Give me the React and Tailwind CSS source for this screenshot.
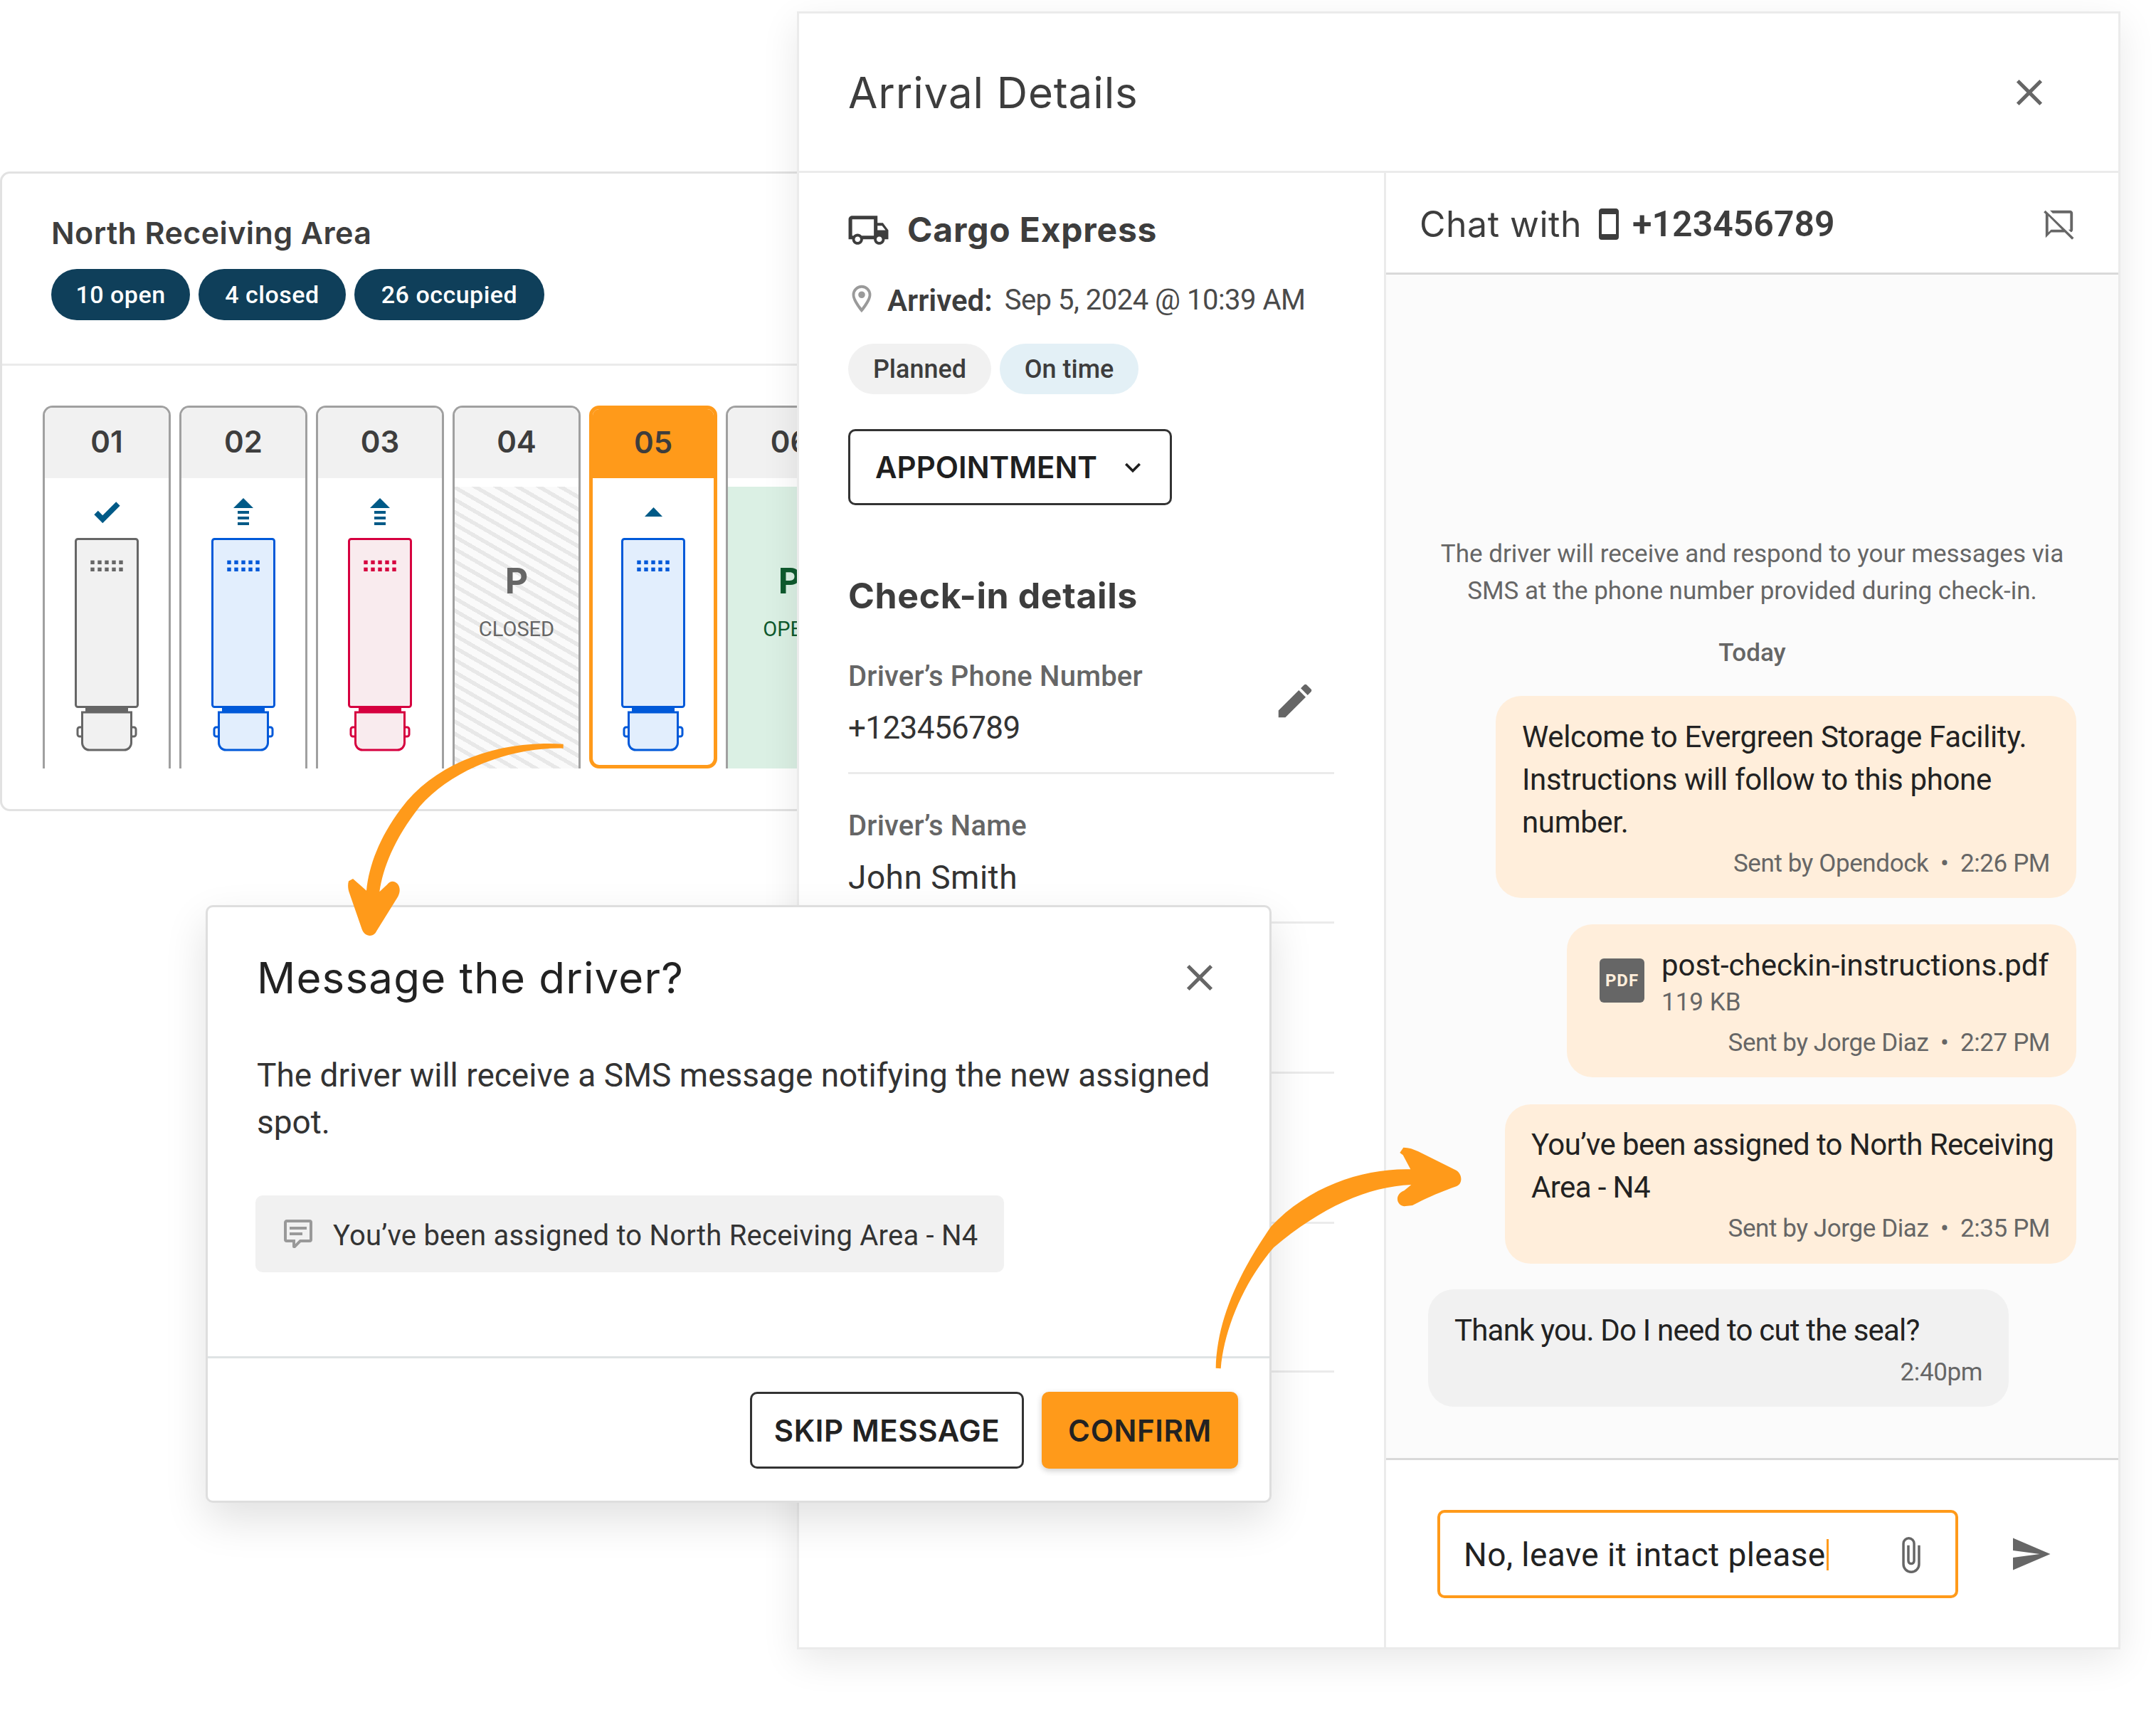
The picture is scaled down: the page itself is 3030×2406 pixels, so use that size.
const HEAD = '[font-family:Inter,sans-serif]';

function Mdi({ d, size, className = '', viewBox = '0 0 24 24' }) {
  return (
    <svg width={size} height={size} viewBox={viewBox} className={`shrink-0 ${className}`} fill="currentColor">
      <path d={d} />
    </svg>
  );
}

const ICONS = {
  close: 'M19,6.41L17.59,5L12,10.59L6.41,5L5,6.41L10.59,12L5,17.59L6.41,19L12,13.41L17.59,19L19,17.59L13.41,12L19,6.41Z',
  truck: 'M18 18.5C18.83 18.5 19.5 17.83 19.5 17C19.5 16.17 18.83 15.5 18 15.5C17.17 15.5 16.5 16.17 16.5 17C16.5 17.83 17.17 18.5 18 18.5M19.5 9.5H17V12H21.46L19.5 9.5M6 18.5C6.83 18.5 7.5 17.83 7.5 17C7.5 16.17 6.83 15.5 6 15.5C5.17 15.5 4.5 16.17 4.5 17C4.5 17.83 5.17 18.5 6 18.5M20 8L23 12V17H21C21 18.66 19.66 20 18 20C16.34 20 15 18.66 15 17H9C9 18.66 7.66 20 6 20C4.34 20 3 18.66 3 17H1V6C1 4.89 1.89 4 3 4H17V8H20M3 6V15H3.76C4.31 14.39 5.11 14 6 14C6.89 14 7.69 14.39 8.24 15H15V6H3Z',
  pin: 'M12,6.5A2.5,2.5 0 0,1 14.5,9A2.5,2.5 0 0,1 12,11.5A2.5,2.5 0 0,1 9.5,9A2.5,2.5 0 0,1 12,6.5M12,2A7,7 0 0,1 19,9C19,14.25 12,22 12,22C12,22 5,14.25 5,9A7,7 0 0,1 12,2M12,4A5,5 0 0,0 7,9C7,10 7,12 12,18.71C17,12 17,10 17,9A5,5 0 0,0 12,4Z',
  chevron: 'M7.41,8.58L12,13.17L16.59,8.58L18,10L12,16L6,10L7.41,8.58Z',
  pencil: 'M20.71,7.04C21.1,6.65 21.1,6 20.71,5.63L18.37,3.29C18,2.9 17.35,2.9 16.96,3.29L15.12,5.12L18.87,8.87M3,17.25V21H6.75L17.81,9.93L14.06,6.18L3,17.25Z',
  phone: 'M17,19H7V5H17M17,1H7C5.89,1 5,1.89 5,3V21A2,2 0 0,0 7,23H17A2,2 0 0,0 19,21V3C19,1.89 18.1,1 17,1Z',
  chatOff: 'M7.2 4L5.2 2H20C21.1 2 22 2.9 22 4V16C22 16.9 21.4 17.7 20.6 17.9L18.7 16H20V4H7.2M22.7 22.1L21.4 23.4L16 18H6L2 22V4.6L.6 3.3L1.9 2L22.7 22.1M14 16L4 6V18L6 16H14Z',
  comment: 'M9,22A1,1 0 0,1 8,21V18H4A2,2 0 0,1 2,16V4C2,2.89 2.9,2 4,2H20A2,2 0 0,1 22,4V16A2,2 0 0,1 20,18H13.9L10.2,21.71C10,21.9 9.75,22 9.5,22V22H9M10,16V19.08L13.08,16H20V4H4V16H10M6,7H18V9H6V7M6,11H15V13H6V11Z',
  check: 'M9,20.42L2.79,14.21L5.62,11.38L9,14.77L18.88,4.88L21.71,7.71L9,20.42Z',
  clip: 'M16.5,6V17.5A4,4 0 0,1 12.5,21.5A4,4 0 0,1 8.5,17.5V5A2.5,2.5 0 0,1 11,2.5A2.5,2.5 0 0,1 13.5,5V15.5A1,1 0 0,1 12.5,16.5A1,1 0 0,1 11.5,15.5V6H10V15.5A2.5,2.5 0 0,0 12.5,18A2.5,2.5 0 0,0 15,15.5V5A4,4 0 0,0 11,1A4,4 0 0,0 7,5V17.5A5.5,5.5 0 0,0 12.5,23A5.5,5.5 0 0,0 18,17.5V6H16.5Z',
  send: 'M2,21L23,12L2,3V10L17,12L2,14V21Z',
};

// trailer seen from above, same drawing in every occupied spot
function Trailer({ stroke, fill }) {
  const rows = [31.6, 41.6];
  const cols = [22.3, 32.3, 42.3, 52.3, 62.3];
  return (
    <svg width="90" height="300" viewBox="0 0 90 300" className="shrink-0">
      <rect x="1.5" y="1.5" width="87" height="236" rx="3" fill={fill} stroke={stroke} strokeWidth="3" />
      {rows.map(y => cols.map(x => <rect key={`${x}-${y}`} x={x} y={y} width="5.4" height="5.4" fill={stroke} />))}
      <rect x="15" y="238" width="60" height="7" fill={stroke} />
      <path d="M10.5 245H79.5V288a10 10 0 0 1-10 10H20.5a10 10 0 0 1-10-10Z" fill={fill} stroke={stroke} strokeWidth="3" />
      <path d="M10 266H7a3 3 0 0 0-3 3v7a3 3 0 0 0 3 3h3M80 266h3a3 3 0 0 1 3 3v7a3 3 0 0 1-3 3h-3" fill="none" stroke={stroke} strokeWidth="3" />
    </svg>
  );
}

function StateIcon({ type }) {
  if (type === 'check') return <Mdi d={ICONS.check} size={46} className="text-[#005a87]" />;
  if (type === 'up') {
    return (
      <svg width="28" height="38" viewBox="0 0 28 38" className="text-[#005a87]" fill="currentColor">
        <path d="M14 0L28 14H0Z" />
        <rect x="6" y="18" width="16" height="4" />
        <rect x="6" y="26" width="16" height="4" />
        <rect x="6" y="34" width="16" height="4" />
      </svg>
    );
  }
  return (
    <svg width="25" height="13" viewBox="0 0 25 13" className="text-[#005a87]" fill="currentColor">
      <path d="M12.5 0L25 13H0Z" />
    </svg>
  );
}

function Spot({ label, truck, icon, active, status }) {
  return (
    <div
      className={`flex h-[510px] w-[180px] shrink-0 flex-col overflow-hidden ${
        active
          ? 'rounded-[14px] border-[5px] border-[#ff9a1a]'
          : 'rounded-t-[14px] border-x-[3px] border-t-[3px] border-[#a0a0a0]'
      }`}
    >
      <div
        className={`flex shrink-0 items-center justify-center pb-[4px] ${HEAD} text-[42px] font-semibold text-[#3d3d3d] ${
          active ? 'h-[97px] bg-[#ff9a1a]' : 'h-[99px] bg-[#f1f1f1]'
        }`}
      >
        {label}
      </div>
      {truck && (
        <div className="flex flex-col items-center pt-[28px]">
          <div className="flex h-[38px] items-center justify-center">
            <StateIcon type={icon} />
          </div>
          <div className="mt-[18px]">
            <Trailer {...truck} />
          </div>
        </div>
      )}
      {status === 'closed' && (
        <div className="mt-[12px] flex flex-1 flex-col items-center bg-[repeating-linear-gradient(30deg,#fafafa_0_9.5px,#e8e8e8_9.5px_15px)] pt-[107px] text-[#666666]">
          <div className={`${HEAD} text-[50px] leading-[50px] font-bold`}>P</div>
          <div className="mt-[26px] text-[29px] leading-[34px]">CLOSED</div>
        </div>
      )}
      {status === 'open' && (
        <div className="mt-[12px] flex flex-1 flex-col items-center bg-[#dbf0e4] pt-[107px] text-[#0f5a2e]">
          <div className={`${HEAD} text-[50px] leading-[50px] font-bold`}>P</div>
          <div className="mt-[26px] text-[29px] leading-[34px]">OPEN</div>
        </div>
      )}
    </div>
  );
}

function Pill({ className, children }) {
  return (
    <span className={`flex h-[72px] items-center justify-center rounded-full bg-[#0f3f5a] text-[34px] font-medium tracking-[0.5px] text-white ${className}`}>
      {children}
    </span>
  );
}

function AreaCard() {
  const gray = { stroke: '#666666', fill: '#f1f1f1' };
  const blue = { stroke: '#0059d9', fill: '#e2eefd' };
  const red = { stroke: '#d6003f', fill: '#f9ebee' };
  return (
    <div className="absolute top-[241px] left-0 h-[899px] w-[1180px] overflow-hidden rounded-[14px] border-[3px] border-[#e2e2e2] bg-white">
      <div className="h-[270px] border-b-[3px] border-[#ebebeb] pt-[57px] pl-[69px]">
        <h2 className={`${HEAD} text-[43px] leading-[52px] font-semibold tracking-[0.4px] text-[#3d3d3d]`}>North Receiving Area</h2>
        <div className="mt-[25px] flex gap-[12px]">
          <Pill className="w-[195px]">10 open</Pill>
          <Pill className="w-[207px]">4 closed</Pill>
          <Pill className="w-[267px]">26 occupied</Pill>
        </div>
      </div>
      <div className="flex gap-[12px] pt-[56px] pl-[57px]">
        <Spot label="01" truck={gray} icon="check" />
        <Spot label="02" truck={blue} icon="up" />
        <Spot label="03" truck={red} icon="up" />
        <Spot label="04" status="closed" />
        <Spot label="05" truck={blue} icon="small" active />
        <Spot label="06" status="open" />
      </div>
    </div>
  );
}

function Field({ label, value, valueClass, edit }) {
  return (
    <div className="relative h-[210px] border-b-[3px] border-[#ebebeb] pt-[50px]">
      <div className="text-[40px] leading-[46px] font-medium tracking-[0.2px] text-[#666666]">{label}</div>
      <div className={`mt-[23px] leading-[52px] text-[#333333] ${valueClass}`}>{value}</div>
      {edit && <Mdi d={ICONS.pencil} size={62} className="absolute top-[76px] right-[24px] text-[#666666]" />}
    </div>
  );
}

function DetailsColumn() {
  return (
    <div className="w-[825px] shrink-0 border-r-[3px] border-[#ebebeb] pt-[57px] pr-[70px] pl-[69px]">
      <div className="flex h-[46px] items-center">
        <Mdi d={ICONS.truck} size={61} className="-ml-[2px] text-[#3d3d3d]" />
        <span className={`ml-[24px] ${HEAD} text-[48px] font-bold tracking-[0.8px] text-[#3d3d3d]`}>Cargo Express</span>
      </div>
      <div className="mt-[54px] flex h-[44px] items-center text-[42px] text-[#4a4a4a]">
        <Mdi d={ICONS.pin} size={46} className="-mt-[4px] ml-[-4px] text-[#9a9a9a]" />
        <span className="ml-[13px] font-semibold text-[#3d3d3d]">Arrived:</span>
        <span className="ml-[17px] text-[40px] tracking-[-0.5px]">Sep 5, 2024 @ 10:39 AM</span>
      </div>
      <div className="mt-[39px] flex gap-[12px] text-[36px] font-medium text-[#3d3d3d]">
        <span className="flex h-[71px] w-[201px] items-center justify-center rounded-full bg-[#f1f1f1]">Planned</span>
        <span className="flex h-[71px] w-[195px] items-center justify-center rounded-full bg-[#e3f0f6]">On time</span>
      </div>
      <div className={`mt-[49px] flex h-[107px] w-[455px] items-center rounded-[10px] border-[3px] border-[#333333] pl-[35px] ${HEAD} text-[42px] font-semibold text-[#1f1f1f]`}>
        APPOINTMENT
        <Mdi d={ICONS.chevron} size={44} className="ml-[28px] text-[#1f1f1f]" />
      </div>
      <h3 className={`mt-[99px] mb-[13px] ${HEAD} text-[50px] leading-[56px] font-bold tracking-[0.6px] text-[#3d3d3d]`}>Check-in details</h3>
      <Field label="Driver’s Phone Number" value="+123456789" valueClass="text-[44px] tracking-[-0.6px]" edit />
      <Field label="Driver’s Name" value="John Smith" valueClass="text-[46px] tracking-[0.5px]" />
      <div className="h-[211px] border-b-[3px] border-[#ebebeb]" />
      <div className="h-[211px] border-b-[3px] border-[#ebebeb]" />
      <div className="h-[209px] border-b-[3px] border-[#ebebeb]" />
    </div>
  );
}

function Meta({ children, className = '' }) {
  return <div className={`text-right text-[35px] leading-[40px] tracking-[-0.4px] text-[#666666] ${className}`}>{children}</div>;
}

function ChatColumn() {
  return (
    <div className="flex min-w-0 flex-1 flex-col bg-[#fbfbfb]">
      <div className="flex h-[143px] shrink-0 items-center justify-between border-b-[3px] border-[#d9d9d9] bg-white pt-[4px] pr-[60px] pl-[47px]">
        <div className="flex items-center text-[#3d3d3d]">
          <span className={`${HEAD} text-[50px] tracking-[0.5px]`}>Chat with</span>
          <Mdi d={ICONS.phone} size={48} className="ml-[14px] text-[#3d3d3d]" />
          <span className="ml-[9px] text-[50px] font-semibold">+123456789</span>
        </div>
        <Mdi d={ICONS.chatOff} size={46} className="text-[#666666]" />
      </div>

      <div className="flex flex-1 flex-col justify-end pr-[59px] pb-[72px] pl-[59px]">
        <p className="text-center text-[35px] leading-[52px] text-[#666666]">
          The driver will receive and respond to your messages via
          <br />
          SMS at the phone number provided during check-in.
        </p>
        <div className="mt-[39px] mb-[38px] text-center text-[35px] leading-[44px] font-medium text-[#666666]">Today</div>

        <div className="w-[816px] self-end rounded-[36px] bg-[#ffeedb] px-[37px] pt-[28px] pb-[28px] text-[42px] leading-[60px] tracking-[-0.35px] whitespace-nowrap text-[#222222]">
          Welcome to Evergreen Storage Facility.
          <br />
          Instructions will follow to this phone
          <br />
          number.
          <Meta className="mt-[8px]">Sent by Opendock&nbsp; •&nbsp; 2:26 PM</Meta>
        </div>

        <div className="mt-[37px] w-[716px] self-end rounded-[36px] bg-[#ffeedb] pt-[35px] pr-[37px] pb-[28px] pl-[46px]">
          <div className="flex gap-[24px]">
            <div className="mt-[13px] flex h-[62px] w-[63px] shrink-0 items-center justify-center rounded-[6px] bg-[#666666] text-[24px] font-bold tracking-[1px] text-[#ffeedb]">
              PDF
            </div>
            <div>
              <div className="text-[42px] leading-[46px] whitespace-nowrap text-[#222222]">post-checkin-instructions.pdf</div>
              <div className="mt-[9px] text-[35px] leading-[40px] text-[#666666]">119 KB</div>
            </div>
          </div>
          <Meta className="mt-[17px]">Sent by Jorge Diaz&nbsp; •&nbsp; 2:27 PM</Meta>
        </div>

        <div className="mt-[38px] w-[803px] self-end rounded-[36px] bg-[#ffeedb] pt-[27px] pr-[37px] pb-[29px] pl-[37px] text-[42px] leading-[60px] tracking-[-0.6px] whitespace-nowrap text-[#222222]">
          You’ve been assigned to North Receiving
          <br />
          Area - N4
          <Meta className="mt-[8px]">Sent by Jorge Diaz&nbsp; •&nbsp; 2:35 PM</Meta>
        </div>

        <div className="mt-[36px] w-[816px] rounded-[36px] bg-[#f1f1f1] px-[37px] pt-[28px] pb-[28px] text-[42px] leading-[60px] tracking-[-0.8px] text-[#222222]">
          Thank you. Do I need to cut the seal?
          <Meta className="mt-[9px]">2:40pm</Meta>
        </div>
      </div>

      <div className="flex h-[266px] shrink-0 items-start border-t-[3px] border-[#d9d9d9] bg-white pt-[70px] pl-[72px]">
        <div className="flex h-[124px] w-[732px] items-center rounded-[10px] border-[4px] border-[#ff9a1a] bg-white pt-[2px] pr-[47px] pl-[33px] text-[46px] tracking-[0.45px] text-[#222222]">
          <span>No, leave it intact please</span>
          <span className="ml-[1px] h-[44px] w-[3px] bg-[#ff9a1a]" />
          <svg width="30" height="55" viewBox="6 0.5 13 23" fill="currentColor" className="ml-auto text-[#666666]">
            <path d={ICONS.clip} />
          </svg>
        </div>
        <Mdi d={ICONS.send} size={60} className="mt-[32px] ml-[72px] text-[#666666]" />
      </div>
    </div>
  );
}

function ArrivalPanel() {
  return (
    <div className="absolute top-[16px] left-[1120px] flex h-[2302px] w-[1860px] flex-col border-[3px] border-[#ebebeb] bg-white shadow-[0_16px_50px_rgba(0,0,0,0.09)]">
      <div className="flex h-[224px] shrink-0 items-center justify-between border-b-[3px] border-[#ebebeb] pr-[94px] pl-[69px]">
        <h1 className={`${HEAD} text-[60px] tracking-[0.9px] text-[#3d3d3d]`}>Arrival Details</h1>
        <Mdi d={ICONS.close} size={62} className="text-[#666666]" />
      </div>
      <div className="flex min-h-0 flex-1">
        <DetailsColumn />
        <ChatColumn />
      </div>
    </div>
  );
}

function MessageDialog() {
  return (
    <div className="absolute top-[1272px] left-[289px] flex h-[840px] w-[1498px] flex-col rounded-[10px] border-[3px] border-[#dedede] bg-white shadow-[0_24px_60px_rgba(0,0,0,0.12)]">
      <div className="relative h-[631px] shrink-0 pt-[64px] pl-[69px]">
        <h2 className={`${HEAD} text-[60px] leading-[70px] tracking-[1.2px] text-[#222222]`}>Message the driver?</h2>
        <Mdi d={ICONS.close} size={62} className="absolute top-[68px] right-[67px] text-[#666666]" />
        <p className="mt-[69px] text-[46px] leading-[66px] text-[#333333]">
          The driver will receive a SMS message notifying the new assigned
          <br />
          spot.
        </p>
        <div className="mt-[70px] flex h-[108px] w-[1052px] -translate-x-[2px] items-center rounded-[10px] bg-[#f1f1f1] pl-[36px]">
          <Mdi d={ICONS.comment} size={48} className="text-[#999999]" />
          <span className="mt-[5px] ml-[25px] text-[40px] tracking-[0.22px] text-[#333333]">You’ve been assigned to North Receiving Area - N4</span>
        </div>
      </div>
      <div className={`flex flex-1 justify-end gap-[25px] border-t-[3px] border-[#dfe3e4] pt-[47px] pr-[44px] ${HEAD} text-[42px] font-semibold tracking-[0.6px] text-[#222222]`}>
        <div className="flex h-[108px] w-[385px] items-center justify-center rounded-[10px] border-[3px] border-[#333333]">SKIP MESSAGE</div>
        <div className="flex h-[108px] w-[276px] items-center justify-center rounded-[10px] bg-[#ff9a1a] shadow-[0_3px_8px_rgba(0,0,0,0.2)]">CONFIRM</div>
      </div>
    </div>
  );
}

function Arrows() {
  return (
    <>
      <svg className="absolute top-[1030px] left-[470px]" width="350" height="300" viewBox="0 0 1050 900" fill="#ff9a1a">
        <path d="M965 47C700 30 430 120 280 320C190 440 145 560 135 665L78 615L60 625C55 640 58 660 62 672L115 825C125 860 165 865 178 835L268 690C278 670 278 650 265 635C250 620 232 625 222 640L190 670C205 570 250 450 360 310C500 150 750 60 965 65Z" />
      </svg>
      <svg className="absolute top-[1590px] left-[1690px]" width="390" height="350" viewBox="0 0 1170 1050" fill="#ff9a1a">
        <path d="M56 998C60 800 150 600 290 400C450 230 680 155 877 160L845 100L832 90L847 68C870 68 890 75 910 85L1065 162C1095 175 1100 220 1070 232C1020 250 960 272 885 312L850 316C815 310 810 265 850 250L880 225C700 232 500 320 300 490C170 640 90 840 77 1000Z" />
      </svg>
    </>
  );
}

export default function App() {
  return (
    <div className="relative h-[2406px] w-[3030px] overflow-hidden bg-white [font-family:Roboto,sans-serif]">
      <AreaCard />
      <ArrivalPanel />
      <MessageDialog />
      <Arrows />
    </div>
  );
}
